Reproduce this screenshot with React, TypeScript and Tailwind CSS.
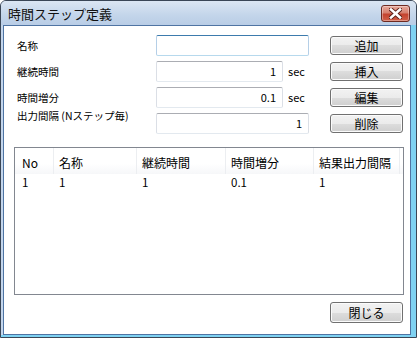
const jp = "font-['Noto_Sans_CJK_JP',sans-serif]";

const btn =
  "flex items-center justify-center w-[73px] rounded-[3px] border border-[#707070] bg-[linear-gradient(#f2f2f2,#ebebeb_50%,#dddddd_50%,#cfcfcf)] shadow-[inset_0_0_0_1px_#fbfbfb] text-[12px] leading-none text-black";

const field =
  "h-[21px] flex items-center justify-end pr-[6px] rounded-[2px] border border-[#dbdfe6] border-t-[#abadb3] border-b-[#e3e9ef] bg-white text-[11px] leading-none text-black";

function FormRow({
  label,
  value,
  unit,
  button,
  focused,
  raised,
}: {
  label: string;
  value: string;
  unit?: boolean;
  button: string;
  focused?: boolean;
  raised?: boolean;
}) {
  return (
    <div className="flex items-center h-[21px]">
      <div
        className={
          raised
            ? "w-[139px] self-start -mt-[3px] text-[10.5px] leading-[12px]"
            : "w-[139px] text-[10.5px] leading-[12px]"
        }
      >
        {label}
      </div>
      {unit ? (
        <div className="flex items-center w-[153px]">
          <div className={`${field} w-[127px]`}>{value}</div>
          <span className="ml-[5px] text-[11px] leading-none">sec</span>
        </div>
      ) : (
        <div
          className={
            focused
              ? "h-[21px] w-[153px] rounded-[2px] border border-[#b5cfe7] border-t-[#3d7bad] border-b-[#b7d9ed] bg-white"
              : `${field} w-[153px]`
          }
        >
          {focused ? null : value}
        </div>
      )}
      <div className={`${btn} ml-auto h-[19px]`}>{button}</div>
    </div>
  );
}

const cols = [
  { title: "No", w: "w-[39px]", pl: "pl-[7px]", v: "1" },
  { title: "名称", w: "w-[83px]", pl: "pl-[5px]", v: "1" },
  { title: "継続時間", w: "w-[89px]", pl: "pl-[5px]", v: "1" },
  { title: "時間増分", w: "w-[88px]", pl: "pl-[5px]", v: "0.1" },
  { title: "結果出力間隔", w: "w-[86px]", pl: "pl-[5px]", v: "1" },
];

export default function App() {
  return (
    <div
      className={`${jp} w-[417px] h-[338px] flex flex-col border border-[#3a4656] rounded-t-[6px] overflow-hidden bg-[#c4d6ec] text-black`}
    >
      {/* Title bar */}
      <div className="h-[24px] flex items-center justify-between pl-[7px] pr-[6px] bg-[linear-gradient(#dbe6f3,#c3d5ea_60%,#b9cde6)]">
        <span className="text-[13px] leading-none text-[#111]">時間ステップ定義</span>
        <div className="w-[29px] h-[17px] flex items-center justify-center rounded-[3px] border border-[#6e2a22] bg-[linear-gradient(#e7a99c,#d7806f_45%,#c4432f_55%,#d1604a)] shadow-[inset_0_0_0_1px_rgba(255,255,255,0.35)]">
          <svg width="13" height="11" viewBox="0 0 13 11">
            <path d="M2 1.5 L11 9.5 M11 1.5 L2 9.5" stroke="#5a1e17" strokeWidth="4.4" strokeLinecap="square" />
            <path d="M2 1.5 L11 9.5 M11 1.5 L2 9.5" stroke="#ffffff" strokeWidth="2.6" strokeLinecap="square" />
          </svg>
        </div>
      </div>

      {/* Frame + client area */}
      <div className="flex-1 flex bg-[#7fd2f2] pb-[2px]">
        <div className="w-[2px] bg-[#c4d6ec]" />
        <div className="flex-1 flex flex-col border border-[#4f74a3] bg-white pt-[9px] pb-[10px] pl-[13px] pr-[6px]">
          <div className="flex flex-col gap-[5px] pr-px">
            <FormRow label="名称" value="" button="追加" focused />
            <FormRow label="継続時間" value="1" unit button="挿入" />
            <FormRow label="時間増分" value="0.1" unit button="編集" />
            <FormRow label="出力間隔 (Nステップ毎)" value="1" button="削除" raised />
          </div>

          {/* List view */}
          <div className="mt-[13px] -ml-[3px] h-[148px] border border-[#828790] bg-white">
            <div className="flex h-[26px] bg-[linear-gradient(#ffffff,#ffffff_60%,#f6f7f9)]">
              {cols.map((c) => (
                <div
                  key={c.title}
                  className={`${c.w} ${c.pl} pt-[9px] border-r border-[#eceef1] text-[12px] leading-[12px]`}
                >
                  {c.title}
                </div>
              ))}
            </div>
            <div className="flex h-[17px] items-center">
              {cols.map((c) => (
                <div key={c.title} className={`${c.w} ${c.pl} text-[11.5px] leading-none`}>
                  {c.v}
                </div>
              ))}
            </div>
          </div>

          <div className="mt-[7px] flex justify-end pr-px">
            <div className={`${btn} h-[21px]`}>閉じる</div>
          </div>
        </div>
        <div className="w-[5px]" />
      </div>
    </div>
  );
}
